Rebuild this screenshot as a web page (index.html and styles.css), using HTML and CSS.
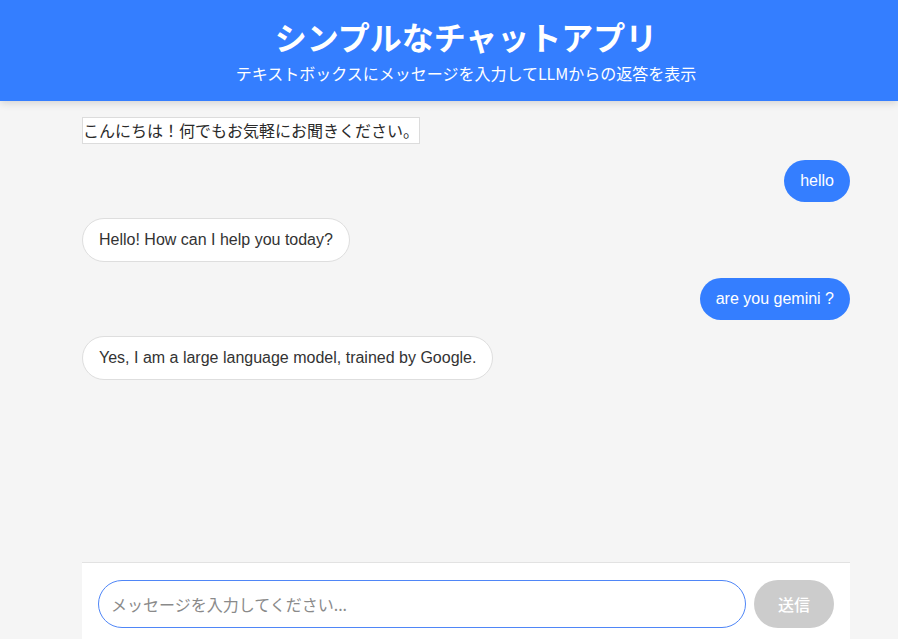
FILE: index.html
```html
<!DOCTYPE html>
<html lang="ja">
<head>
<meta charset="utf-8">
<title>シンプルなチャットアプリ</title>
<link rel="stylesheet" href="styles.css">
</head>
<body>
<div class="app">
  <header class="header">
    <h1 class="title">シンプルなチャットアプリ</h1>
    <p class="subtitle">テキストボックスにメッセージを入力してLLMからの返答を表示</p>
  </header>
  <div class="main">
    <div class="column">
      <div class="chat">
        <div class="greeting">こんにちは！何でもお気軽にお聞きください。</div>
        <div class="msg user">hello</div>
        <div class="msg bot">Hello! How can I help you today?</div>
        <div class="msg user">are you gemini ?</div>
        <div class="msg bot">Yes, I am a large language model, trained by Google.</div>
      </div>
      <div class="composer">
        <input class="input" type="text" placeholder="メッセージを入力してください..." autofocus>
        <button class="send" type="button">送信</button>
      </div>
    </div>
  </div>
</div>
</body>
</html>
```
FILE: styles.css
```css
* { box-sizing: border-box; }
html, body {
  margin: 0;
  padding: 0;
  height: 100%;
  overflow: hidden;
}
body {
  background: #f5f5f5;
  font-family: "Liberation Sans", "Noto Sans CJK JP", sans-serif;
  color: #333;
}
.app {
  height: 100vh;
  display: flex;
  flex-direction: column;
}
.header {
  background: #347eff;
  color: #fff;
  text-align: center;
  padding: 16px 0 16px 34px;
  box-shadow: 0 2px 8px rgba(0, 0, 0, 0.14);
  position: relative;
  z-index: 1;
  flex: none;
}
.title {
  margin: 0;
  font-family: "Noto Sans CJK JP", sans-serif;
  font-size: 32px;
  line-height: 40px;
  font-weight: 700;
}
.subtitle {
  margin: 5px 0 0;
  font-family: "Noto Sans CJK JP", sans-serif;
  font-size: 16px;
  line-height: 24px;
  font-weight: 400;
}
.main {
  flex: 1;
  min-height: 0;
  padding-left: 34px;
  display: flex;
}
.column {
  width: 768px;
  margin: 0 auto;
  display: flex;
  flex-direction: column;
}
.chat {
  flex: 1;
  min-height: 0;
  padding-top: 16px;
  display: flex;
  flex-direction: column;
  align-items: flex-start;
  gap: 16px;
}
.greeting {
  font-family: "Noto Sans CJK JP", sans-serif;
  font-size: 16px;
  line-height: 25px;
  background: #fff;
  border: 1px solid #dcdcdc;
  color: #2a2a2a;
}
.msg {
  font-size: 16px;
  line-height: 22px;
  padding: 10px 16px;
  border-radius: 22px;
  max-width: 80%;
}
.user {
  align-self: flex-end;
  background: #347eff;
  color: #fff;
}
.bot {
  background: #fff;
  border: 1px solid #dedede;
  color: #333;
}
.composer {
  flex: none;
  background: #fff;
  border-top: 1px solid #e2e2e2;
  padding: 17px 16px 11px;
  display: flex;
  gap: 8px;
}
.input {
  flex: 1;
  height: 48px;
  border: 1px solid #4f86f7;
  border-radius: 24px;
  padding: 0 12px;
  font-family: "Noto Sans CJK JP", sans-serif;
  font-size: 16px;
  color: #333;
  outline: none;
  background: #fff;
}
.input::placeholder {
  color: #8a8a8a;
}
.send {
  width: 80px;
  height: 48px;
  border: none;
  border-radius: 24px;
  background: #cccccc;
  color: #fff;
  font-family: "Noto Sans CJK JP", sans-serif;
  font-size: 16px;
  font-weight: 500;
}
```
